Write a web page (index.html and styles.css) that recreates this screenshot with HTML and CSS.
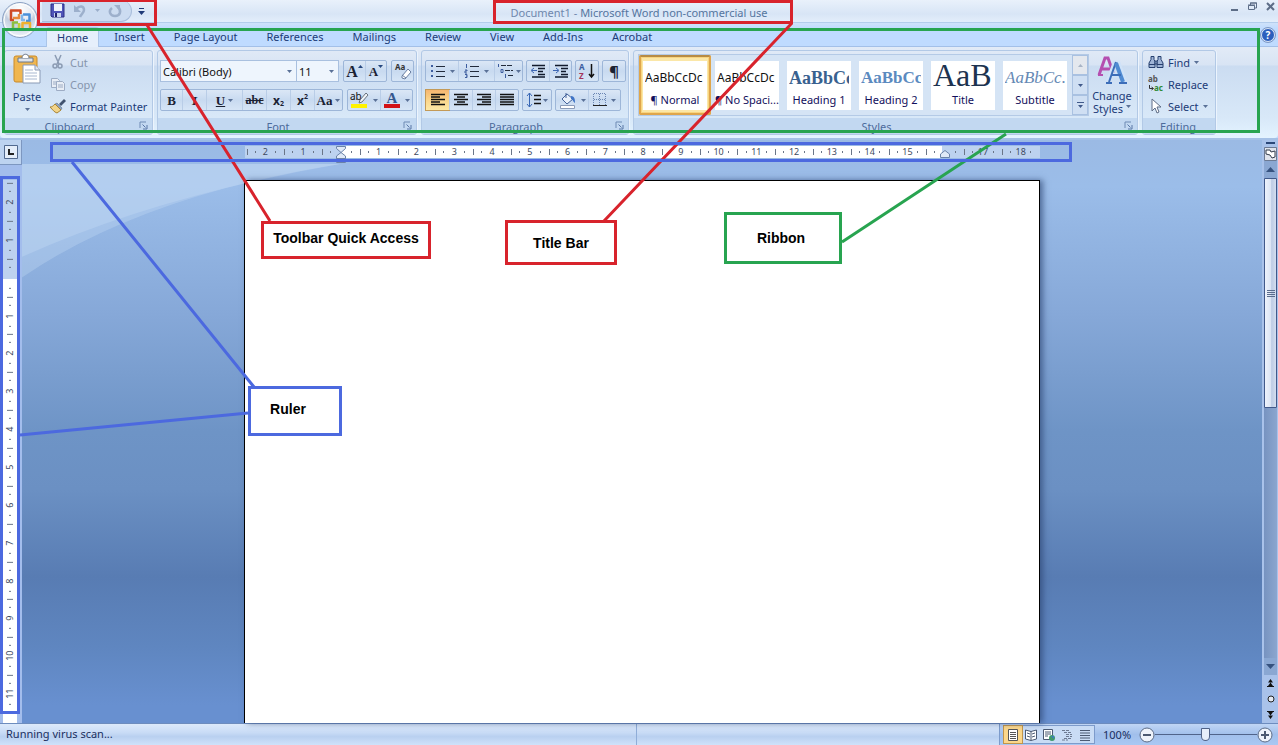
FILE: index.html
```html
<!DOCTYPE html>
<html lang="en">
<head>
<meta charset="utf-8">
<meta name="viewport" content="width=device-width, initial-scale=1">
<title>Document1 - Microsoft Word non-commercial use</title>
<link rel="stylesheet" href="styles.css">
</head>
<body>
<svg class="defs" aria-hidden="true">
  <symbol id="arrow" viewBox="0 0 5 3"><path d="M0 0h5L2.500 3z" fill="currentColor"/></symbol>
  <symbol id="launch" viewBox="0 0 9 9"><path d="M1 7V1h6" fill="none" stroke="#6f8bb4"/><path d="M3.500 3.500l3 3M8 4v4H4" fill="none" stroke="#5876a6"/></symbol>
</svg>

<header class="titlebar">
  <div class="left">
    <div class="quick">
      <button aria-label="Save"><svg width="15" height="15" viewBox="0 0 15 15"><path d="M1 1h13v13H2L1 13z" fill="#4f54b8" stroke="#2d2f86"/><path d="M4 1h8v7H4z" fill="#eef3fc"/><path d="M4 10h7v4H4z" fill="#c9d4ee"/><path d="M5 10h2v4H5z" fill="#23256e"/></svg></button>
      <button aria-label="Undo"><svg width="14" height="14" viewBox="0 0 14 14" fill="none" stroke="#9db0cc" stroke-width="2.500"><path d="M3 5c4-4 8-3 8 1 0 3-3 4-4 7"/><path d="M1 1v7h7z" fill="#9db0cc" stroke="none"/></svg></button>
      <svg class="arr pale"><use href="#arrow"/></svg>
      <button class="redo" aria-label="Redo"><svg width="14" height="14" viewBox="0 0 14 14" fill="none" stroke="#9db0cc" stroke-width="2.500"><path d="M4 4c-4 3-2 8 3 8s7-5 3-9"/><path d="M6 1h6v6z" fill="#9db0cc" stroke="none"/></svg></button>
    </div>
    <button class="customize" aria-label="Customize Quick Access Toolbar"><svg width="7" height="7" viewBox="0 0 7 7"><path d="M1 0h5v1H1zM0 3h7L3.500 7z" fill="#1f3a78"/></svg></button>
  </div>
  <h1 class="title">Document1 - <b>Microsoft Word non-commercial use</b></h1>
  <div class="window">
    <button aria-label="Minimize"><svg width="9" height="9" viewBox="0 0 9 9"><path d="M1 7h7v2H1z" fill="#5d6d87"/></svg></button>
    <button aria-label="Restore"><svg width="9" height="9" viewBox="0 0 9 9" fill="none" stroke="#5d6d87"><path d="M2.500 3V1h6v5H7M2 1h7"/><path d="M.5 3.500h6v4h-6zM0 3h7"/></svg></button>
    <button aria-label="Close"><svg width="9" height="9" viewBox="0 0 9 9"><path d="M1 1l7 7M8 1L1 8" stroke="#5d6d87" stroke-width="2"/></svg></button>
  </div>
</header>
<button class="office" aria-label="Office Button"><svg width="38" height="39" viewBox="0 0 38 39">
  <defs><radialGradient id="orb" cx=".5" cy=".2" r=".85"><stop offset="0" stop-color="#fff"/><stop offset=".45" stop-color="#e3e8f0"/><stop offset=".52" stop-color="#c3cedf"/><stop offset="1" stop-color="#f8fbff"/></radialGradient></defs>
  <circle cx="19" cy="20" r="17.500" fill="url(#orb)" stroke="#8ba1c3"/><circle cx="19" cy="20" r="16" fill="none" stroke="#fff"/>
  <g fill="none" stroke-width="2.500" stroke-linejoin="round">
    <path d="M13 20h-3v-9.500h9.500V14" stroke="#cf4a26"/><path d="M12 18h6v-4" stroke="#e88a3a"/>
    <path d="M22 14.500h6.500V21H25" stroke="#4a90d9"/><path d="M21 14.500V20h3" stroke="#7fb5ea"/>
    <path d="M17 22.500h-5V29h6.500" stroke="#8bbf3f"/><path d="M18 23v5" stroke="#c2cf3a"/>
    <path d="M21 29.500h8V23h-7.500v7" stroke="#efb02e"/>
  </g></svg></button>

<div class="tabs-row">
  <nav class="tabs" role="tablist">
    <button role="tab" aria-selected="true" class="tab on">Home</button>
    <button role="tab" class="tab">Insert</button>
    <button role="tab" class="tab">Page Layout</button>
    <button role="tab" class="tab">References</button>
    <button role="tab" class="tab">Mailings</button>
    <button role="tab" class="tab">Review</button>
    <button role="tab" class="tab">View</button>
    <button role="tab" class="tab">Add-Ins</button>
    <button role="tab" class="tab">Acrobat</button>
  </nav>
  <button class="help" aria-label="Help">?</button>
</div>

<section class="ribbon">
  <div class="group clipboard">
    <div class="body">
      <button class="big paste">
        <svg width="28" height="32" viewBox="0 0 28 32"><rect x="1" y="3" width="23" height="26" rx="2" fill="#f0b64f" stroke="#c98a2b"/><path d="M5 5h15v4H5z" fill="#dfe4ec" stroke="#6b7687"/><path d="M9 5c0-5 7-5 7 0" fill="#fff" stroke="#6b7687"/><path d="M10 12h12l5 5v13H10z" fill="#fff" stroke="#8a9ab5"/><path d="M22 12v5h5" fill="#dfe7f3" stroke="#8a9ab5"/><path d="M12 17h8M12 20h12M12 23h12M12 26h12" stroke="#a9b8d0"/></svg>
        <span>Paste</span><svg class="arr"><use href="#arrow"/></svg>
      </button>
      <div class="stack">
        <button class="cmd" disabled><svg width="16" height="16" viewBox="0 0 16 16" fill="none" stroke="#8b9bb3" stroke-width="1.500"><path d="M5 1l4 9M11 1L7 10"/><circle cx="5" cy="12" r="2"/><circle cx="10" cy="12" r="2"/></svg>Cut</button>
        <button class="cmd" disabled><svg width="16" height="16" viewBox="0 0 16 16" fill="#e8edf5" stroke="#9dacc4"><path d="M1.500 2.500h6l2 2v7h-8zM3 6h4M3 8h4"/><path d="M6.500 5.500h6l2 2v7h-8zM8 9h5M8 11h5"/></svg>Copy</button>
        <button class="cmd"><svg width="16" height="16" viewBox="0 0 16 16"><path d="M9 6l5-5 2 2-5 5z" fill="#41536f"/><path d="M7 5l5 5-1 2-6-6z" fill="#8fa3bf" stroke="#53637b" stroke-width=".5"/><path d="M5 6l6 6-4 3C4 14 3 12 0 9c2 0 3-1 5-3z" fill="#f2d489" stroke="#a98534"/></svg>Format Painter</button>
      </div>
    </div>
    <footer>Clipboard<button aria-label="Clipboard options"><svg width="9" height="9"><use href="#launch"/></svg></button></footer>
  </div>

  <div class="group font">
    <div class="body rows">
      <div class="row">
        <div class="combos">
          <label class="combo name"><select aria-label="Font"><option>Calibri (Body)</option></select><svg class="arr"><use href="#arrow"/></svg></label>
          <label class="combo size"><select aria-label="Font size"><option>11</option></select><svg class="arr"><use href="#arrow"/></svg></label>
        </div>
        <div class="set"><button class="w21 serif large" aria-label="Grow font">A<svg class="up" width="5" height="3" viewBox="0 0 5 3"><path d="M0 3h5L2.500 0z" fill="#26477f"/></svg></button><button class="w21 serif" aria-label="Shrink font">A<svg class="up" width="5" height="3"><use href="#arrow"/></svg></button></div>
        <div class="set"><button class="w21" aria-label="Clear formatting"><svg width="18" height="18" viewBox="0 0 18 18"><text x="1" y="8" class="t-small">Aa</text><path d="M8 14l6-7 3 3-6 7-3-1z" fill="#fff" stroke="#697ea1"/><path d="M8 13l4 3" stroke="#697ea1"/></svg></button></div>
      </div>
      <div class="row">
        <div class="set">
          <button class="w21 serif"><b>B</b></button><button class="w24 serif"><i>I</i></button><button class="w36 serif"><u>U</u><svg class="arr"><use href="#arrow"/></svg></button><button class="w24 serif small"><s>abc</s></button><button class="w24 script">x<sub>2</sub></button><button class="w24 script">x<sup>2</sup></button><button class="w28 serif">Aa<svg class="arr"><use href="#arrow"/></svg></button>
        </div>
        <div class="set">
          <button class="w32" aria-label="Text highlight color"><svg width="19" height="18" viewBox="0 0 19 18"><text x="0" y="9" class="t-ab">ab</text><path d="M10 9l6-7 2 2-6 7-3 1z" fill="#f1f4f8" stroke="#68727e"/><path d="M1 13h16v4H1z" fill="#fff200"/></svg><svg class="arr"><use href="#arrow"/></svg></button><button class="w32" aria-label="Font color"><svg width="18" height="18" viewBox="0 0 18 18"><text x="9" y="12" text-anchor="middle" class="t-color">A</text><path d="M1 13h16v4H1z" fill="#d31216"/></svg><svg class="arr"><use href="#arrow"/></svg></button>
        </div>
      </div>
    </div>
    <footer>Font<button aria-label="Font options"><svg width="9" height="9"><use href="#launch"/></svg></button></footer>
  </div>

  <div class="group para">
    <div class="body rows">
      <div class="row">
        <div class="set">
          <button class="w32" aria-label="Bullets"><svg width="16" height="14" viewBox="0 0 16 14"><path d="M1 1h2v2H1zM1 6h2v2H1zM1 11h2v2H1z" fill="#3c5c9e"/><path d="M6 2.500h9M6 7.500h9M6 12.500h9" stroke="#222b3c"/></svg><svg class="arr"><use href="#arrow"/></svg></button><button class="w36" aria-label="Numbering"><svg width="16" height="14" viewBox="0 0 16 14"><path d="M2.500 0v4M1 6h2v1H1v2h2M1 10.500h2v3H1M2 12h1" fill="none" stroke="#3c5c9e"/><path d="M6 2.500h9M6 7.500h9M6 12.500h9" stroke="#222b3c"/></svg><svg class="arr"><use href="#arrow"/></svg></button><button class="w28" aria-label="Multilevel list"><svg width="18" height="14" viewBox="0 0 18 14"><path d="M1.500 0v3M4 5.500h2v3H4zM8.500 10v4" fill="none" stroke="#3c5c9e"/><path d="M4 1.500h12M8 6.500h8M11 11.500h5" stroke="#222b3c" stroke-dasharray="5 1"/></svg><svg class="arr tight"><use href="#arrow"/></svg></button>
        </div>
        <div class="set"><button class="w22" aria-label="Decrease indent"><svg width="16" height="14" viewBox="0 0 16 14"><path d="M2 1.500h13M8 4.500h7M8 7.500h5M8 10.500h7M2 13h13" stroke="#111a2c" stroke-width="1.500"/><path d="M7 6.500H2M4 4L1 6.500 4 9" stroke="#3c66b4" fill="none"/></svg></button><button class="w22" aria-label="Increase indent"><svg width="16" height="14" viewBox="0 0 16 14"><path d="M2 1.500h13M8 4.500h7M8 7.500h5M8 10.500h7M2 13h13" stroke="#111a2c" stroke-width="1.500"/><path d="M0 6.500h5M3 4l3 2.500L3 9" stroke="#3c66b4" fill="none"/></svg></button></div>
        <div class="set"><button class="w22" aria-label="Sort"><svg width="18" height="18" viewBox="0 0 18 18"><text x="1" y="8" class="t-sort">A</text><text x="1" y="17" class="t-sort z">Z</text><path d="M13.500 2v13M11 12l2.500 3 2.500-3" stroke="#111" stroke-width="1.500" fill="none"/></svg></button></div>
        <div class="set"><button class="w22 pil" aria-label="Show paragraph marks">¶</button></div>
      </div>
      <div class="row">
        <div class="set">
          <button class="w23 picked" aria-label="Align left"><svg width="14" height="12" viewBox="0 0 14 12"><path d="M0 .5h14M0 3h9M0 5.500h14M0 8h9M0 10.500h14" stroke="#111" stroke-width="1.300"/></svg></button><button class="w23" aria-label="Center"><svg width="14" height="12" viewBox="0 0 14 12"><path d="M0 .5h14M3 3h8M0 5.500h14M3 8h8M0 10.500h14" stroke="#111" stroke-width="1.300"/></svg></button><button class="w23" aria-label="Align right"><svg width="14" height="12" viewBox="0 0 14 12"><path d="M0 .5h14M5 3h9M0 5.500h14M5 8h9M0 10.500h14" stroke="#111" stroke-width="1.300"/></svg></button><button class="w23" aria-label="Justify"><svg width="14" height="12" viewBox="0 0 14 12"><path d="M0 .5h14M0 3h14M0 5.500h14M0 8h14M0 10.500h14" stroke="#111" stroke-width="1.300"/></svg></button>
        </div>
        <div class="set"><button class="w28" aria-label="Line spacing"><svg width="16" height="16" viewBox="0 0 16 16"><path d="M3.500 1v14M1 4l2.500-3L6 4M1 12l2.500 3L6 12" fill="none" stroke="#3867b5"/><path d="M8 3.500h7M8 7.500h7M8 11.500h7" stroke="#111" stroke-width="1.300"/></svg><svg class="arr tight"><use href="#arrow"/></svg></button></div>
        <div class="set"><button class="w32" aria-label="Shading"><svg width="18" height="17" viewBox="0 0 18 17"><path d="M3 7l5-5 6 5-6 5z" fill="#e9f0fa" stroke="#44639a"/><path d="M7 1v5" stroke="#44639a"/><path d="M12 4c4 0 4 4 4 7-2-1-2-4-4-4z" fill="#3f74c6"/><path d="M1.500 13.500h14v3h-14z" fill="#fff" stroke="#8a9bb8"/></svg><svg class="arr"><use href="#arrow"/></svg></button><button class="w32" aria-label="Borders"><svg width="14" height="14" viewBox="0 0 14 14"><path d="M1 .5h12M1 6.500h12M.5 1v11M6.500 1v11M12.500 1v11" stroke="#6b86b3" stroke-dasharray="1 1"/><path d="M0 12.500h14" stroke="#222"/></svg><svg class="arr"><use href="#arrow"/></svg></button></div>
      </div>
    </div>
    <footer>Paragraph<button aria-label="Paragraph options"><svg width="9" height="9"><use href="#launch"/></svg></button></footer>
  </div>

  <div class="group styles">
    <div class="body">
      <div class="gallery">
        <button class="style chosen"><span class="card"><span class="demo">AaBbCcDc</span><span class="nm">¶ Normal</span></span></button>
        <button class="style"><span class="card"><span class="demo">AaBbCcDc</span><span class="nm">¶ No Spaci...</span></span></button>
        <button class="style"><span class="card"><span class="demo h1">AaBbCc</span><span class="nm">Heading 1</span></span></button>
        <button class="style"><span class="card"><span class="demo h2">AaBbCc</span><span class="nm">Heading 2</span></span></button>
        <button class="style"><span class="card"><span class="demo ti">AaB</span><span class="nm">Title</span></span></button>
        <button class="style"><span class="card"><span class="demo su">AaBbCc.</span><span class="nm">Subtitle</span></span></button>
        <div class="spin">
          <button class="off" aria-label="Row up"><svg width="5" height="3" viewBox="0 0 5 3"><path d="M0 3h5L2.500 0z" fill="#a8b4c6"/></svg></button>
          <button aria-label="Row down"><svg width="5" height="3"><use href="#arrow"/></svg></button>
          <button aria-label="More styles"><svg width="7" height="7" viewBox="0 0 7 7"><path d="M0 0h7v1H0zM1 3h5L3.500 6z" fill="currentColor"/></svg></button>
        </div>
      </div>
      <button class="big change">
        <svg width="30" height="30" viewBox="0 0 30 30" fill="none"><path d="M2 20L8 3h3l6 17M5 14h9" stroke="#b54fb0" stroke-width="3"/><path d="M1 20h5M14 20h4" stroke="#b54fb0" stroke-width="2"/><path d="M11 27L18 8h3l7 19M14 20h11" stroke="#cfe2f8" stroke-width="5"/><path d="M12 27L19 7" stroke="#3c6db8" stroke-width="2"/><path d="M19 8l7 19" stroke="#4f8ad2" stroke-width="4"/><path d="M14 20h10M9 28h6M22 28h8" stroke="#3c6db8" stroke-width="2"/></svg>
        <span>Change</span><span>Styles <svg class="arr"><use href="#arrow"/></svg></span>
      </button>
    </div>
    <footer>Styles<button aria-label="Styles options"><svg width="9" height="9"><use href="#launch"/></svg></button></footer>
  </div>

  <div class="group editing">
    <div class="body">
      <div class="stack">
        <button class="cmd"><svg width="16" height="16" viewBox="0 0 16 16" fill="#9fb4d6" stroke="#27406f"><path d="M3 2.500h3v3l1 2v6H1V9l2-3.500zM10 2.500h3v3L15 9v4.500H9v-6l1-2z"/><path d="M7 7h2v3H7zM1 10.500h6M9 10.500h6"/></svg>Find<svg class="arr"><use href="#arrow"/></svg></button>
        <button class="cmd"><svg width="16" height="16" viewBox="0 0 16 16"><text x="0" y="6" class="t-rep">ab</text><text x="6" y="15" class="t-rep g">ac</text><path d="M1.500 9v3.500H5M3.500 11l2 1.500-2 1.500" fill="none" stroke="#333"/></svg>Replace</button>
        <button class="cmd"><svg width="16" height="16" viewBox="0 0 16 16"><path d="M4 1v12l3-3 2 5 2-1-2-5h4z" fill="#fff" stroke="#5e6d86"/></svg>Select<svg class="arr"><use href="#arrow"/></svg></button>
      </div>
    </div>
    <footer>Editing</footer>
  </div>
</section>

<main class="work">
  <svg class="swoosh" viewBox="0 0 400 150" preserveAspectRatio="none" aria-hidden="true"><path d="M0 0H400Q170 40 0 117z" fill="#c4daf4" opacity=".4"/><path d="M0 0H400Q150 40 0 143z" fill="#c4daf4" opacity=".35"/></svg>
  <div class="side">
    <button class="tabstop" aria-label="Tab selector"><svg width="14" height="14" viewBox="0 0 14 14"><path d="M.5.5h13v13H.5z" fill="#e4edf9" stroke="#51698f"/><path d="M5 4v5h5" fill="none" stroke="#222" stroke-width="2"/></svg></button>
    <div class="vruler"><span>2</span><span>1</span><span></span><span>1</span><span>2</span><span>3</span><span>4</span><span>5</span><span>6</span><span>7</span><span>8</span><span>9</span><span>10</span><span>11</span></div>
  </div>
  <div class="center">
    <div class="hruler">
      <span>2</span><span>1</span><span class="mark"><svg width="10" height="17" viewBox="0 0 10 17" fill="#dfe9f7" stroke="#6b83a8"><path d="M.5.5h9v2L5 6.500l-4.500-4zM5 6.500L9.500 10v2.500h-9V10zM.5 12.500h9v4h-9z"/></svg></span><span>1</span><span>2</span><span>3</span><span>4</span><span>5</span><span>6</span><span>7</span><span>8</span><span>9</span><span>10</span><span>11</span><span>12</span><span>13</span><span>14</span><span>15</span><span class="mark end"><svg width="10" height="8" viewBox="0 0 10 8"><path d="M5 .5L9.500 4v3.500h-9V4z" fill="#dfe9f7" stroke="#6b83a8"/></svg></span><span>17</span><span>18</span>
    </div>
    <article class="page" aria-label="Document page"></article>
  </div>
  <div class="scroll">
    <i class="split"></i>
    <button aria-label="View ruler" class="vr"><svg width="13" height="14" viewBox="0 0 13 14"><path d="M.5.5h12v13H.5z" fill="#dfe3ec" stroke="#6c7a93"/><path d="M2 3h4l1 2 4-1v6l-3 1-2-3-4-1z" fill="#fff" stroke="#333c4c"/></svg></button>
    <button aria-label="Scroll up" class="sb"><svg width="9" height="5" viewBox="0 0 9 5"><path d="M0 5h9L4.500 0z" fill="#36527f"/></svg></button>
    <div class="track"><div class="thumb"><i></i><i></i><i></i><i></i></div></div>
    <button aria-label="Scroll down" class="sb"><svg width="9" height="5" viewBox="0 0 9 5"><path d="M0 0h9L4.500 5z" fill="#36527f"/></svg></button>
    <button aria-label="Previous page" class="nav"><svg width="7" height="8" viewBox="0 0 7 8"><path d="M1 3.500h5L3.500 0zM1 7h5L3.500 3.500zM0 7h7v1H0z" fill="#111"/></svg></button>
    <button aria-label="Browse object" class="nav"><svg width="8" height="8" viewBox="0 0 8 8"><circle cx="4" cy="4" r="3" fill="#e4e9f2" stroke="#222"/></svg></button>
    <button aria-label="Next page" class="nav"><svg width="7" height="8" viewBox="0 0 7 8"><path d="M0 0h7v1H0zM1 1h5L3.500 4.500zM1 4.500h5L3.500 8z" fill="#111"/></svg></button>
  </div>
</main>

<footer class="status">
  <span class="msg">Running virus scan...</span>
  <span class="rest"></span>
  <div class="tools">
    <div class="views">
      <button class="picked" aria-label="Print layout"><svg width="12" height="12" viewBox="0 0 12 12"><path d="M1.500.5h9v11h-9z" fill="#fff" stroke="#555"/><path d="M3 3.500h6M3 5.500h6M3 7.500h6M3 9.500h6" stroke="#555"/></svg></button>
      <button aria-label="Full screen reading"><svg width="12" height="12" viewBox="0 0 12 12"><path d="M6 2.500L.5 1v9L6 11.500 11.500 10V1zM6 2.500v9" fill="#fff" stroke="#4b5a73"/><path d="M2 4l3 1M2 7l3 1M7 5l3-1M7 8l3-1" stroke="#4b5a73"/></svg></button>
      <button aria-label="Web layout"><svg width="12" height="12" viewBox="0 0 12 12"><path d="M.5.500h9v10h-9z" fill="#fff" stroke="#4b5a73"/><path d="M2 3h6M2 5h6M2 7h3" stroke="#4b5a73"/><circle cx="9" cy="9" r="3" fill="#3f9a6b"/><path d="M8 7h3v3z" fill="#3c78c4"/></svg></button>
      <button aria-label="Outline"><svg width="12" height="12" viewBox="0 0 12 12"><path d="M1 1.500h8M3 3.500h7M5 5.500h6M5 7.500h6M3 9.500h8M1 11h6" stroke="#6d7a91" stroke-dasharray="3 1"/></svg></button>
      <button aria-label="Draft"><svg width="12" height="12" viewBox="0 0 12 12"><path d="M1 1.500h10M1 4h10M1 6.500h10M1 9h10M1 11.500h10" stroke="#4b5a73"/></svg></button>
    </div>
    <button class="pct">100%</button>
    <button class="round" aria-label="Zoom out"><svg width="16" height="16" viewBox="0 0 16 16"><circle cx="8" cy="8" r="7" fill="#eef3fb" stroke="#5b6b86"/><path d="M4 7h8v2H4z" fill="#4c5a72"/></svg></button>
    <input class="zoom" type="range" min="0" max="100" value="49" aria-label="Zoom">
    <button class="round" aria-label="Zoom in"><svg width="16" height="16" viewBox="0 0 16 16"><circle cx="8" cy="8" r="7" fill="#eef3fb" stroke="#5b6b86"/><path d="M4 7h3V4h2v3h3v2H9v3H7V9H4z" fill="#4c5a72"/></svg></button>
  </div>
</footer>

<div class="notes">
  <svg width="1278" height="745" viewBox="0 0 1278 745" fill="none" stroke-width="3" aria-hidden="true">
    <g stroke="#28a450"><path d="M3.500 29.500h1255v102H3.500zM1006 134L842 242"/></g>
    <g stroke="#d8232c"><path d="M38.500 .5h117v24h-117zM494.500 1.500h297v21h-297zM147 25l123 196M792 23L604 221"/></g>
    <g stroke="#4c69df"><path d="M51.500 143.500h1019v17h-1019zM1.500 177.500h17v535h-17zM72 162l182 225M20 435l228-22"/></g>
  </svg>
  <div class="note red quick-note">Toolbar Quick Access</div>
  <div class="note red title-note">Title Bar</div>
  <div class="note green ribbon-note">Ribbon</div>
  <div class="note blue ruler-note">Ruler</div>
</div>
</body>
</html>
```
FILE: styles.css
```css
* { box-sizing: border-box; }
body {
  margin: 0; height: 100vh; min-height: 480px; overflow: hidden; position: relative;
  display: flex; flex-direction: column;
  font: 11px/15px "Noto Sans", "Open Sans", sans-serif; color: #1c3b78; background: #bfdbff;
}
button, select, input { font: inherit; color: inherit; background: none; border: 0; padding: 0; margin: 0; }
svg { display: block; flex: none; overflow: visible; }
.defs { position: absolute; width: 0; height: 0; }
.arr { width: 5px; height: 3px; color: #5a7197; }
.pale { color: #9aaecb; }

/* Title bar */
.titlebar {
  height: 23px; flex: none; display: grid; grid-template-columns: 1fr auto 1fr; align-items: start; padding: 0 3px;
  background: linear-gradient(#e9f1fb 0, #dfeaf8 8px, #d8e5f6 14px, #e3eefb 100%);
  border-bottom: 1px solid #b3cdec;
}
.left { display: flex; padding-left: 39px; }
.quick {
  display: flex; align-items: center; gap: 8px; height: 22px; width: 90px; padding-left: 8px;
  border: 1px solid #a9bedc; border-left: 0; border-top: 0; border-radius: 0 11px 11px 0; background: #ccdcf1;
}
.customize { padding: 7px 6px; }
.title { margin: 0; padding-top: 5px; font-size: 11px; line-height: 15px; font-weight: 400; color: #6f87ad; }
.title b { font-weight: 400; color: #55759f; }
.window { display: flex; gap: 9px; padding-top: 2px; justify-content: flex-end; }
.office { position: absolute; left: 1px; top: 0; }

/* Tabs */
.tabs-row { height: 24px; flex: none; display: flex; justify-content: space-between; align-items: flex-end; padding: 0 3px 0 46px; background: linear-gradient(#cfe2fa, #bfdbff 6px); border-bottom: 1px solid #a3c0e8; }
.tabs { display: flex; gap: 1px; }
.tab { height: 19px; padding: 0 14px; line-height: 17px; }
.tab.on { background: #e6effb; border: 1px solid #aac5e9; border-bottom: 0; border-radius: 3px 3px 0 0; padding: 0 10px; height: 20px; margin-bottom: -1px; }
.help { width: 14px; height: 14px; margin-bottom: 4px; border-radius: 50%; border: 1px solid #dfe9f7; background: #2c5fbd; color: #fff; font-weight: 700; font-size: 10px; line-height: 12px; outline: 1px solid #7c97c4; }

/* Ribbon */
.ribbon {
  flex: none; height: 91px; display: flex; gap: 4px; padding: 3px 4px; border-radius: 0 0 4px 4px;
  background: linear-gradient(#e2ebf7 0, #d8e4f4 18px, #cbdcf1 19px, #d8e8f8 70px, #e3f3ff 100%);
}
.group { flex: none; display: flex; flex-direction: column; border: 1px solid #b2c9e6; border-radius: 3px; overflow: hidden; box-shadow: 1px 0 0 #ecf4fd; }
.group .body { flex: 1; display: flex; }
.group > footer { flex: none; height: 16px; line-height: 18px; text-align: center; background: #c2d8f1; color: #4d6b9c; position: relative; }
.group > footer button { position: absolute; right: 4px; top: 3px; }
.clipboard { width: 149px; }
.clipboard > footer { padding-right: 18px; }
.font { width: 260px; }
.font > footer { padding-right: 18px; }
.para { width: 208px; }
.para > footer { padding-right: 18px; }
.styles { width: 505px; }
.styles > footer { padding-right: 18px; }
.editing { width: 74px; }
.editing > footer { padding-right: 2px; }
.big { display: flex; flex-direction: column; align-items: center; }
.paste { width: 44px; padding-top: 2px; gap: 3px; }
.paste span { line-height: 17px; }
.stack { display: flex; flex-direction: column; }
.cmd { display: flex; align-items: center; gap: 4px; height: 22px; padding: 0 1px; white-space: nowrap; }
.cmd:disabled { color: #8595ac; }
.editing .stack { padding-left: 4px; }

.rows { flex-direction: column; gap: 7px; padding: 9px 0 0 2px; }
.row { display: flex; gap: 4px; }
.para .row { gap: 3px; padding-left: 1px; }
.combos { display: flex; margin-right: 1px; }
.combo { display: grid; align-items: center; height: 22px; border: 1px solid #a9c0df; background: #eef5fd; color: #111; margin-right: -1px; }
.combo > * { grid-area: 1 / 1; }
.combo select { appearance: none; width: 100%; height: 20px; padding-left: 2px; }
.combo .arr { justify-self: end; margin-right: 4px; }
.name { width: 137px; }
.size { width: 43px; }
.set { display: flex; height: 22px; border: 1px solid #9db6d8; border-radius: 2px; background: linear-gradient(#dbe7f6, #c8daf0 50%, #d6e5f6); color: #1b2233; }
.set button { display: flex; align-items: center; justify-content: center; gap: 4px; border-left: 1px solid #b9cde7; }
.set button:first-child { border-left: 0; }
.set .serif { font-family: "Liberation Serif", serif; font-size: 13px; font-weight: 700; gap: 3px; }
.set .large { font-size: 16px; }
.set .small { font-size: 12px; }
.set .w21 { width: 21px; gap: 0; } .set .w22 { width: 22px; } .set .w23 { width: 23px; } .set .w24 { width: 24px; }
.set .w28 { width: 28px; } .set .w32 { width: 32px; } .set .w36 { width: 36px; }
.set .script { font-weight: 700; font-size: 12px; gap: 0; }
.up { align-self: flex-start; margin-top: 4px; color: #26477f; }
.set .tight { margin-left: -3px; }
sub, sup { font-size: 7px; line-height: 7px; }
sub { align-self: flex-end; margin-bottom: 3px; }
sup { align-self: flex-start; margin-top: 3px; }
.set .pil { font-size: 15px; font-weight: 700; }
.set .picked { background: linear-gradient(#f6b670, #fbd58a 50%, #fde9a6); outline: 1px solid #c39a58; }
.t-small { font: 700 8px "Noto Sans", sans-serif; fill: #333; }
.t-ab { font: 10px "Noto Sans", sans-serif; fill: #111; }
.t-color { font: 700 15px "Liberation Serif", serif; fill: #36588f; }
.t-sort { font: 700 8px "Noto Sans", sans-serif; fill: #3a5ca0; }
.t-sort.z { fill: #a3345c; }
.t-rep { font: 700 8px "Noto Sans", sans-serif; fill: #555; }
.t-rep.g { fill: #2f8a35; }

.gallery { display: flex; height: 62px; width: 451px; margin: 3px 0 0 4px; border: 1px solid #b4cae6; background: #d5e4f5; overflow: hidden; }
.style { width: 72px; flex: none; padding: 4px; display: flex; justify-content: center; align-items: center; }
.card { display: flex; flex-direction: column; justify-content: flex-end; width: 64px; height: 49px; background: #fff; overflow: hidden; padding-bottom: 2px; }
.chosen { border: 2px solid #dfa64c; border-top-color: #b78b45; border-radius: 2px; padding: 1px; background: #fbe7a8; box-shadow: inset 0 0 0 1px #f8d580; }
.demo { white-space: nowrap; overflow: hidden; font-size: 12px; line-height: 18px; margin: 0 2px 5px; color: #111; text-align: left; }
.h1 { font: 700 18px/20px "Liberation Serif", serif; color: #39618f; margin-bottom: 4px; }
.h2 { font: 700 17px/20px "Liberation Serif", serif; color: #5b8abf; margin-bottom: 4px; }
.ti { font: 32px/29px "Liberation Serif", serif; color: #1d3350; margin-bottom: 2px; }
.su { font: italic 17px/20px "Liberation Serif", serif; color: #6589b5; margin-bottom: 4px; }
.nm { color: #120f5c; line-height: 16px; white-space: nowrap; text-align: center; }
.spin { flex: 1; display: flex; flex-direction: column; margin-left: 1px; }
.spin button { flex: 1; display: grid; place-items: center; border: 1px solid #a9c1e1; background: #cfdff3; color: #40598a; }
.spin .off { background: #e4e8ee; }
.change { flex: 1; padding: 4px 2px 0 0; }
.change svg:first-child { margin-bottom: 4px; }
.change span { display: flex; align-items: center; gap: 3px; line-height: 13px; }

/* Workspace */
.work {
  flex: 1; min-height: 0; display: flex; position: relative; border-top: 2px solid #a5c1e6;
  background: linear-gradient(#9bbae4 0, #9bbde9 8%, #86a8d8 30%, #6e94c6 50%, #6b90c3 60%, #587cb3 75%, #5f86c0 87%, #6890d0 97%, #6890d0 100%);
}
.swoosh { position: absolute; left: 22px; top: 24px; width: 318px; height: 119px; }
.side { width: 22px; flex: none; display: flex; flex-direction: column; background: #a3bdec; position: relative; }
.tabstop { height: 25px; width: 22px; display: grid; place-items: center; border: 1px solid #7d97c0; border-width: 0 1px 1px 0; background: #bdd3f0; }
.vruler { flex: 1; min-height: 0; display: flex; flex-direction: column; margin: 15px 5px 0 3px; padding: 3px 0 10px; background: linear-gradient(#bdd2ef 99px, #fff 99px); font: 9px/14px "Noto Sans", sans-serif; color: #3d4a60; }
.vruler span {
  flex: 1; writing-mode: vertical-rl; transform: rotate(180deg); text-align: center;
  background: linear-gradient(#6b7688, #6b7688) 50% 100% / 6px 1px no-repeat, linear-gradient(#6b7688, #6b7688) 50% 22% / 2px 1px no-repeat, linear-gradient(#6b7688, #6b7688) 50% 78% / 2px 1px no-repeat;
}
.center { flex: 1; min-width: 0; display: flex; flex-direction: column; align-items: center; position: relative; }
.hruler { width: 795px; max-width: 100%; height: 12px; margin-top: 6px; padding-left: 2px; display: flex; flex: none; background: linear-gradient(90deg, #bdd2ef 96px, #fff 96px, #fff 697px, #bdd2ef 697px); font: 9px/12px "Noto Sans", sans-serif; color: #3d4a60; }
.hruler span {
  flex: 1; display: flex; justify-content: center;
  background: linear-gradient(#6b7688, #6b7688) 0 50% / 1px 6px no-repeat, linear-gradient(#6b7688, #6b7688) 22% 50% / 1px 2px no-repeat, linear-gradient(#6b7688, #6b7688) 78% 50% / 1px 2px no-repeat;
}
.hruler .end { align-items: flex-end; }
.page { width: 796px; max-width: 100%; flex: 1; margin-top: 22px; background: #fff; border: 1px solid #000; border-bottom: 0; box-shadow: 3px 0 6px #2b4470aa; }

.scroll { width: 16px; flex: none; display: flex; flex-direction: column; align-items: center; background: #a9c2ea; padding: 2px 1px 0 2px; }
.split { width: 9px; height: 2px; background: #2b4778; margin-bottom: 3px; }
.vr { height: 14px; }
.sb { width: 13px; height: 17px; display: grid; place-items: center; background: #8aa7d2; }
.track { flex: 1; width: 13px; background: linear-gradient(90deg, #7793c0, #8ba6cf); display: flex; flex-direction: column; }
.thumb { height: 48%; border: 1px solid #41598a; border-radius: 1px; background: linear-gradient(90deg, #edf2fb, #dbe4f4 55%, #bccbe4 60%, #d5dff0); display: flex; flex-direction: column; gap: 1px; align-items: center; justify-content: center; }
.thumb i { width: 8px; height: 1px; background: #5a6c8d; }
.nav { height: 16px; width: 14px; display: grid; place-items: center; }

/* Status bar */
.status { height: 22px; flex: none; display: flex; align-items: stretch; border-top: 1px solid #6d8cbe; background: linear-gradient(#dce9fb, #c9dcf6 40%, #b9d0f0 60%, #cfe2fa); line-height: 20px; color: #1a2f5f; }
.msg { flex: 1; padding-left: 6px; border-right: 1px solid #8fadd8; }
.rest { flex: 0 0 363px; border-right: 1px solid #7c9bcb; }
.tools { display: flex; align-items: center; flex: 0 0 278px; padding: 0 5px 0 3px; background: linear-gradient(#c0d6f5, #a1bfeb 50%, #a9c8f3); }
.views { display: flex; flex: none; border: 1px solid #7d9bcb; height: 19px; width: 92px; background: #c9dcf5; }
.views button { flex: 1; display: grid; place-items: center; }
.views .picked { background: #fbd78b; outline: 1px solid #c2954a; }
.pct { padding: 0 8px; }
.round { flex: none; }
.zoom { flex: 1; width: 0; min-width: 0; appearance: none; height: 16px; }
.zoom::-webkit-slider-runnable-track { height: 14px; background: linear-gradient(#50648a, #50648a) 0 50% / 100% 1px no-repeat; }
.zoom::-webkit-slider-thumb { appearance: none; width: 9px; height: 13px; background: #e6eefa; border: 1px solid #4f6287; border-radius: 1px 1px 5px 5px; }

/* Callouts drawn over the window */
.notes { position: absolute; inset: 0; pointer-events: none; color: #000; }
.note { position: absolute; display: grid; place-items: center; border: 3px solid; background: #fff; font: 700 14px/18px "Liberation Sans", sans-serif; white-space: nowrap; }
.note.red { border-color: #d8232c; }
.note.green { border-color: #28a450; }
.note.blue { border-color: #4c69df; }
.quick-note { left: 261px; top: 221px; width: 170px; height: 38px; padding-bottom: 4px; }
.title-note { left: 505px; top: 220px; width: 112px; height: 45px; }
.ribbon-note { left: 724px; top: 212px; width: 118px; height: 52px; padding-right: 4px; }
.ruler-note { left: 248px; top: 386px; width: 94px; height: 50px; padding: 0 14px 4px 0; }
```
